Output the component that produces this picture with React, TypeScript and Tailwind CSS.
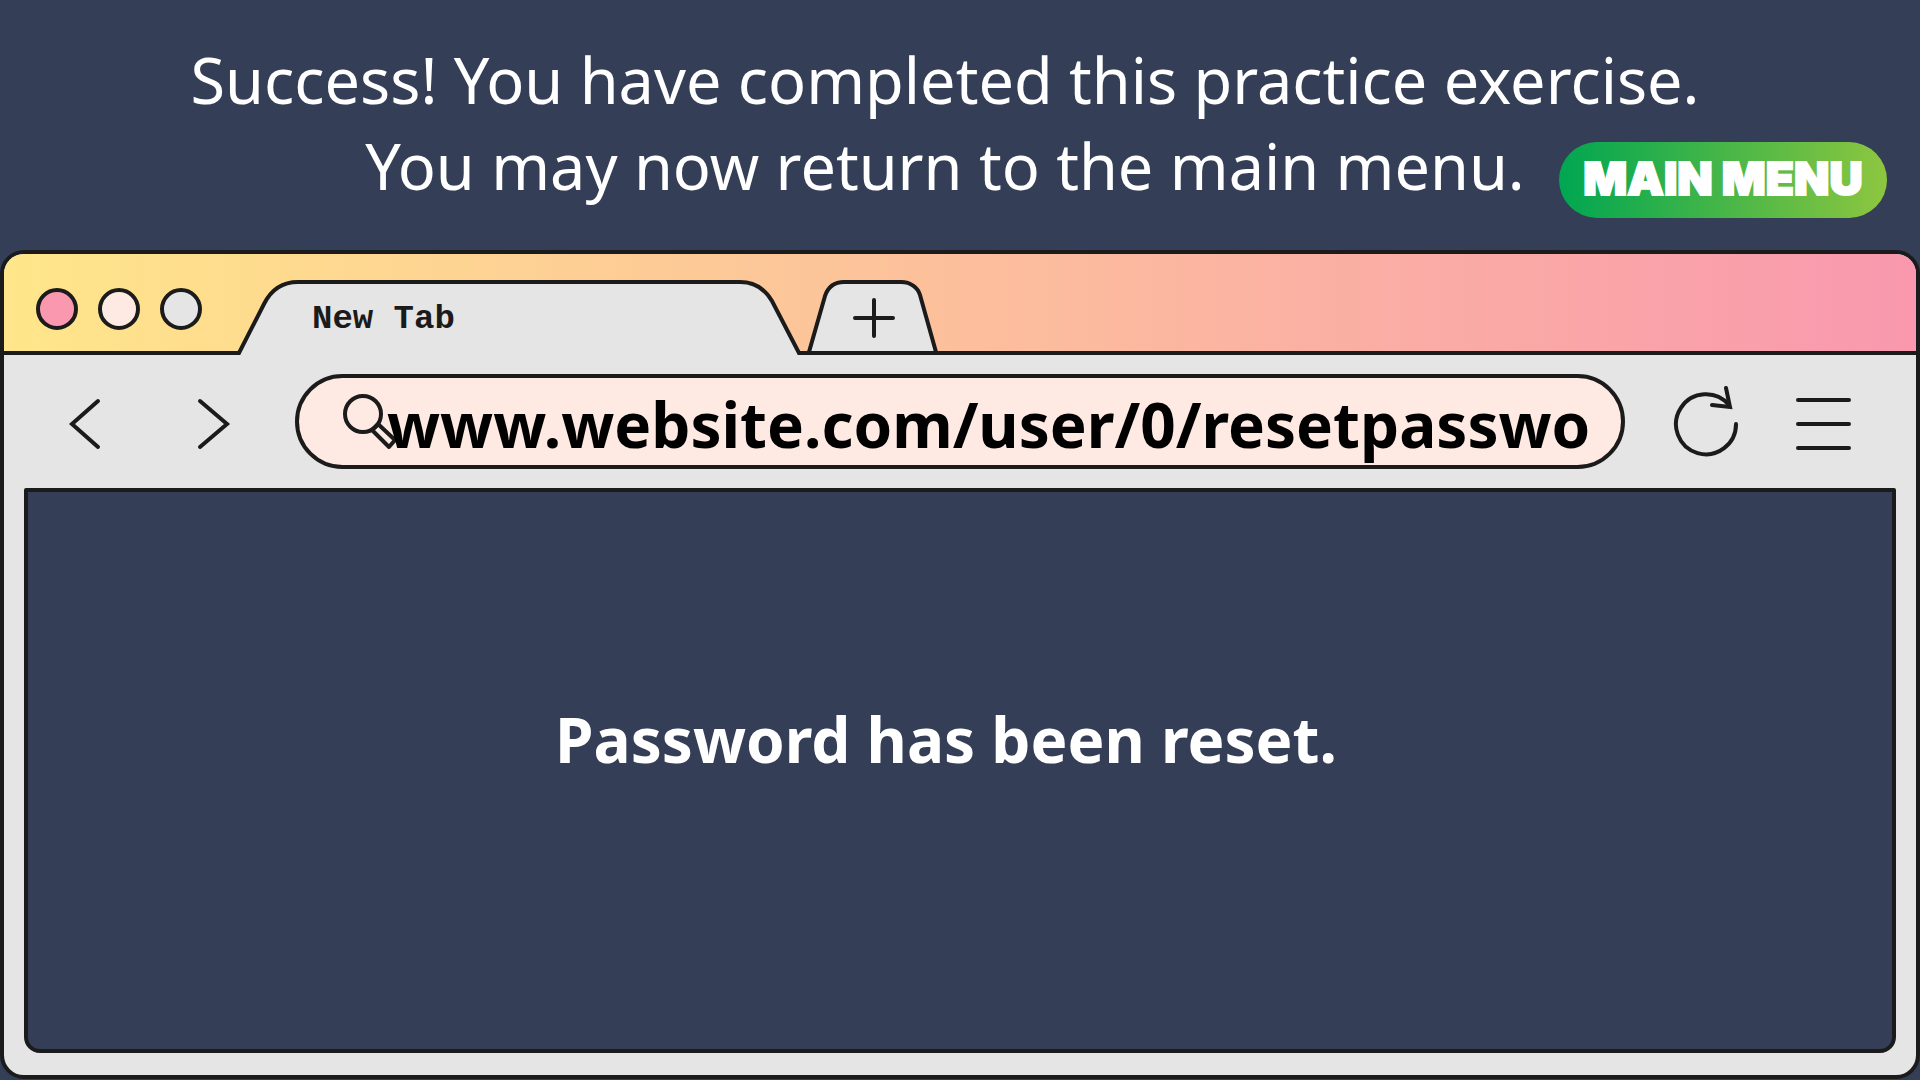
import React from "react";

const INK = "#1b1b1b";

function Tab({ title }: { title: string }) {
  return (
    <div className="-mb-1 ml-8 grid h-[75px] w-[570px] shrink-0">
      <svg className="[grid-area:1/1]" width="570" height="75" viewBox="0 0 570 75" fill="none" aria-hidden="true">
        <path d="M5 73 L30 25 C37 10 49 2 64 2 H506 C520 2 531 9 538 21 L565 73 L564 75 H6 Z" fill="#e5e5e5" />
        <path d="M0 73 H5 L30 24 C37 10 49 2 64 2 H506 C520 2 531 9 538 21 L565 73 H570" stroke={INK} strokeWidth="4" />
      </svg>
      <span className="mt-[21px] ml-[78px] font-['Liberation_Mono',monospace] text-[34px] leading-9 font-bold text-[#1b1b1b] [grid-area:1/1]">
        {title}
      </span>
    </div>
  );
}

function NewTabButton() {
  return (
    <button type="button" aria-label="Open new tab" className="shrink-0">
      <svg className="block" width="134" height="71" viewBox="0 0 134 71" fill="none" aria-hidden="true">
        <path
          d="M5 72 L21 16 C24 7 30 2 40 2 H97 C107 2 114 8 116 15 L132 72"
          fill="#e5e5e5"
          stroke={INK}
          strokeWidth="4"
        />
        <path d="M70 20 V56 M51 38 H89" stroke={INK} strokeWidth="4" strokeLinecap="round" />
      </svg>
    </button>
  );
}

export default function App() {
  return (
    <div className="flex min-h-screen flex-col bg-[#343e56] pb-px font-['Noto_Sans',sans-serif]">
      <header className="relative pt-[37px] pr-[30px] pb-[41px]">
        <p className="text-center text-[63px] leading-[86px] text-white">
          Success! You have completed this practice exercise.
          <br />
          You may now return to the main menu.
        </p>
        <button
          type="button"
          className="absolute right-[33px] bottom-8 h-[76px] w-[328px] rounded-full bg-linear-to-r/srgb from-[#00a651] to-[#8dc63f] pb-1 font-['Inter',sans-serif] text-[46px] leading-none font-black whitespace-nowrap text-white [-webkit-text-stroke:2px_white]"
        >
          MAIN MENU
        </button>
      </header>

      <section className="flex grow flex-col overflow-hidden rounded-3xl border-4 border-[#1b1b1b] bg-[#e5e5e5]">
        <div className="flex h-[101px] items-end border-b-4 border-[#1b1b1b] bg-linear-to-r/srgb from-[#ffe68a] to-[#f998ae]">
          <div className="mb-[21px] ml-8 flex gap-5">
            <button type="button" aria-label="Close" className="size-[42px] rounded-full border-4 border-[#1b1b1b] bg-[#f998ae]" />
            <button type="button" aria-label="Minimize" className="size-[42px] rounded-full border-4 border-[#1b1b1b] bg-[#ffeae3]" />
            <button type="button" aria-label="Maximize" className="size-[42px] rounded-full border-4 border-[#1b1b1b] bg-[#e5e5e5]" />
          </div>
          <Tab title="New Tab" />
          <NewTabButton />
        </div>

        <div className="flex h-[133px] shrink-0 items-center px-[64px]">
          <button type="button" aria-label="Back" className="pt-1">
            <svg width="36" height="54" viewBox="0 0 36 54" fill="none" stroke={INK} strokeWidth="4" strokeLinecap="round" aria-hidden="true">
              <path d="M30 4 L4 27 L30 50" />
            </svg>
          </button>
          <button type="button" aria-label="Forward" className="ml-[91px] pt-1">
            <svg width="36" height="54" viewBox="0 0 36 54" fill="none" stroke={INK} strokeWidth="4" strokeLinecap="round" aria-hidden="true">
              <path d="M5 4 L32 27 L5 50" />
            </svg>
          </button>
          <div className="ml-16 flex h-[95px] min-w-0 grow items-center rounded-full border-4 border-[#1b1b1b] bg-[#ffeae3] pr-4 pl-[42px]">
            <svg className="shrink-0" width="56" height="60" viewBox="0 0 56 60" fill="none" stroke={INK} strokeWidth="4" aria-hidden="true">
              <circle cx="22" cy="22" r="18" />
              <path d="M31 38 L37 32 L54 48 L48 55 Z" strokeLinejoin="round" />
            </svg>
            <input
              type="text"
              aria-label="Address"
              defaultValue="www.website.com/user/0/resetpasswo"
              className="-ml-2.5 w-full min-w-0 bg-transparent pt-1 text-[62px] leading-[84px] font-bold text-black outline-none"
            />
          </div>
          <button type="button" aria-label="Reload" className="ml-12 shrink-0 pt-1">
            <svg width="66" height="76" viewBox="0 0 66 76" fill="none" stroke={INK} strokeWidth="4" strokeLinecap="round" aria-hidden="true">
              <path d="M63 38 A30 30 0 1 1 56 19" />
              <path d="M53 2 L57 21 L39 19" />
            </svg>
          </button>
          <button type="button" aria-label="Menu" className="ml-[57px] shrink-0 pt-1">
            <svg width="56" height="54" viewBox="0 0 56 54" fill="none" stroke={INK} strokeWidth="4" strokeLinecap="round" aria-hidden="true">
              <path d="M2 3 H53 M2 27 H53 M2 51 H53" />
            </svg>
          </button>
        </div>

        <main className="mx-5 mb-[22px] flex grow items-center justify-center rounded-t-xs rounded-b-2xl border-4 border-[#1b1b1b] bg-[#343e56] pr-7 pb-16">
          <h1 className="text-[62px] leading-[86px] font-bold text-white">Password has been reset.</h1>
        </main>
      </section>
    </div>
  );
}
